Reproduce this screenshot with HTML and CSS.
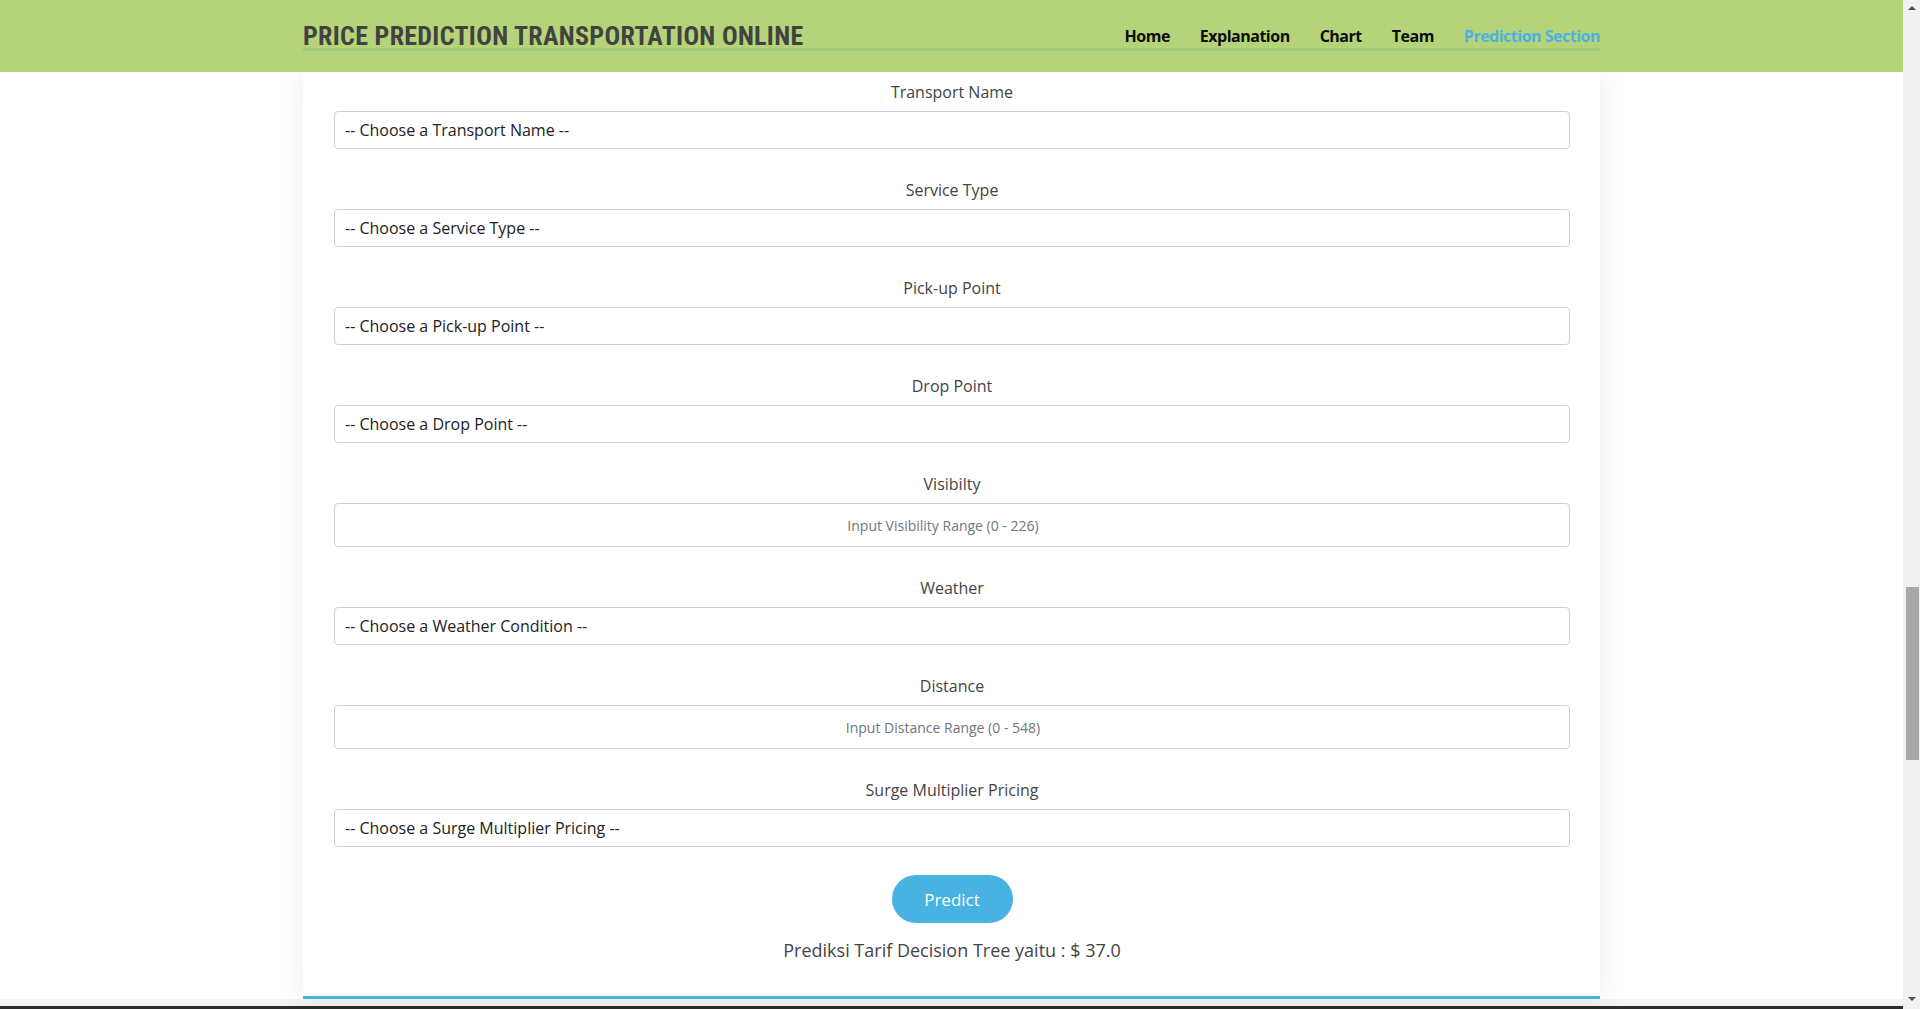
FILE: index.html
```html
<!DOCTYPE html>
<html lang="en">
<head>
<meta charset="utf-8">
<title>Price Prediction Transportation Online</title>
<link rel="stylesheet" href="styles.css">
</head>
<body>
<div class="viewport">
  <div class="page">
    <header class="site-header">
      <div class="header-inner">
        <h1 class="brand">PRICE PREDICTION TRANSPORTATION ONLINE</h1>
        <nav class="nav">
          <a class="nav-link" href="#">Home</a>
          <a class="nav-link" href="#">Explanation</a>
          <a class="nav-link" href="#">Chart</a>
          <a class="nav-link" href="#">Team</a>
          <a class="nav-link active" href="#">Prediction Section</a>
        </nav>
      </div>
    </header>

    <main class="card">
      <form class="form">
        <div class="group">
          <label class="label">Transport Name</label>
          <select class="field select"><option>-- Choose a Transport Name --</option></select>
        </div>
        <div class="group">
          <label class="label">Service Type</label>
          <select class="field select"><option>-- Choose a Service Type --</option></select>
        </div>
        <div class="group">
          <label class="label">Pick-up Point</label>
          <select class="field select"><option>-- Choose a Pick-up Point --</option></select>
        </div>
        <div class="group">
          <label class="label">Drop Point</label>
          <select class="field select"><option>-- Choose a Drop Point --</option></select>
        </div>
        <div class="group">
          <label class="label">Visibilty</label>
          <input class="field input" type="text" placeholder="Input Visibility Range (0 - 226)">
        </div>
        <div class="group">
          <label class="label">Weather</label>
          <select class="field select"><option>-- Choose a Weather Condition --</option></select>
        </div>
        <div class="group">
          <label class="label">Distance</label>
          <input class="field input" type="text" placeholder="Input Distance Range (0 - 548)">
        </div>
        <div class="group last">
          <label class="label">Surge Multiplier Pricing</label>
          <select class="field select"><option>-- Choose a Surge Multiplier Pricing --</option></select>
        </div>
        <div class="actions">
          <button class="btn" type="button">Predict</button>
        </div>
        <p class="result">Prediksi Tarif Decision Tree yaitu : $ 37.0</p>
      </form>
    </main>
    <div class="strip"></div>
    <footer class="footer"></footer>
  </div>

  <div class="scrollbar">
    <span class="arrow up"></span>
    <span class="track"><span class="thumb"></span></span>
    <span class="arrow down"></span>
  </div>
</div>
</body>
</html>
```

FILE: styles.css
```css
html, body {
  margin: 0;
  padding: 0;
  height: 1009px;
  overflow: hidden;
  background: #ffffff;
}

.viewport {
  display: flex;
  height: 1009px;
}

.page {
  flex: 1;
  min-width: 0;
  overflow: hidden;
  background: #ffffff;
}

.site-header {
  position: relative;
  z-index: 2;
  height: 72px;
  background: #b5d479;
}

.header-inner {
  width: 1297px;
  margin: 0 auto;
  padding-top: 24px;
  height: 24px;
  display: flex;
  align-items: center;
  justify-content: space-between;
  border-bottom: 3px solid #a2cb78;
}

.brand {
  margin: 0;
  font-family: "Liberation Sans Narrow", "Roboto Condensed", "Roboto", sans-serif;
  font-weight: 700;
  font-size: 26px;
  line-height: 24px;
  color: #424242;
  letter-spacing: 0.3px;
}

.nav {
  display: flex;
  gap: 30px;
}

.nav-link {
  font-family: "Open Sans", sans-serif;
  font-weight: 700;
  font-size: 16px;
  line-height: 20px;
  color: #0d0d0d;
  text-decoration: none;
  letter-spacing: -0.5px;
}

.nav-link.active {
  color: #4db2e3;
}

.card {
  position: relative;
  z-index: 1;
  width: 1297px;
  margin: 0 auto;
  background: #ffffff;
  box-shadow: 0 0 30px rgba(0, 0, 0, 0.07);
  border-bottom: 3px solid #48b3e3;
}

.form {
  padding: 8px 30px 33px 31px;
}

.group {
  margin-bottom: 29px;
}

.group.last {
  margin-bottom: 0;
}

.label {
  display: block;
  text-align: center;
  font-family: "Open Sans", sans-serif;
  font-size: 16px;
  line-height: 24px;
  color: #444444;
  margin-bottom: 7px;
}

.field {
  display: block;
  width: 100%;
  box-sizing: border-box;
  border: 1px solid #cdd1d5;
  border-radius: 4px;
  background: #ffffff;
  font-family: "Open Sans", sans-serif;
  outline: none;
  margin: 0;
}

.select {
  height: 38px;
  padding: 0 10px;
  font-size: 16px;
  color: #222222;
  -webkit-appearance: none;
  appearance: none;
}

.input {
  height: 44px;
  padding: 0 18px 0 0;
  font-size: 14px;
  text-align: center;
  color: #333333;
}

.input::placeholder {
  color: #6f767c;
}

.actions {
  display: flex;
  justify-content: center;
  margin-top: 28px;
}

.btn {
  width: 121px;
  height: 48px;
  border: none;
  border-radius: 24px;
  background: #48b3e3;
  color: #ffffff;
  font-family: "Open Sans", sans-serif;
  font-size: 17px;
  cursor: pointer;
}

.result {
  margin: 15px 0 0;
  text-align: center;
  font-family: "Open Sans", sans-serif;
  font-size: 18px;
  line-height: 25px;
  color: #444444;
}

.strip {
  height: 7px;
  background: #f3f3f3;
}

.footer {
  height: 40px;
  background: #2b2b2b;
}

.scrollbar {
  width: 17px;
  height: 1009px;
  background: #f1f1f1;
  display: flex;
  flex-direction: column;
  align-items: center;
}

.arrow {
  width: 0;
  height: 0;
  border-left: 4px solid transparent;
  border-right: 4px solid transparent;
}

.arrow.up {
  margin-top: 6px;
  border-bottom: 4px solid #505050;
}

.arrow.down {
  margin-bottom: 8px;
  border-top: 4px solid #505050;
}

.track {
  flex: 1;
  width: 100%;
  display: flex;
  flex-direction: column;
  align-items: center;
}

.thumb {
  width: 13px;
  height: 173px;
  margin-top: 577px;
  margin-left: 1px;
  background: #a8a8a8;
}
```
